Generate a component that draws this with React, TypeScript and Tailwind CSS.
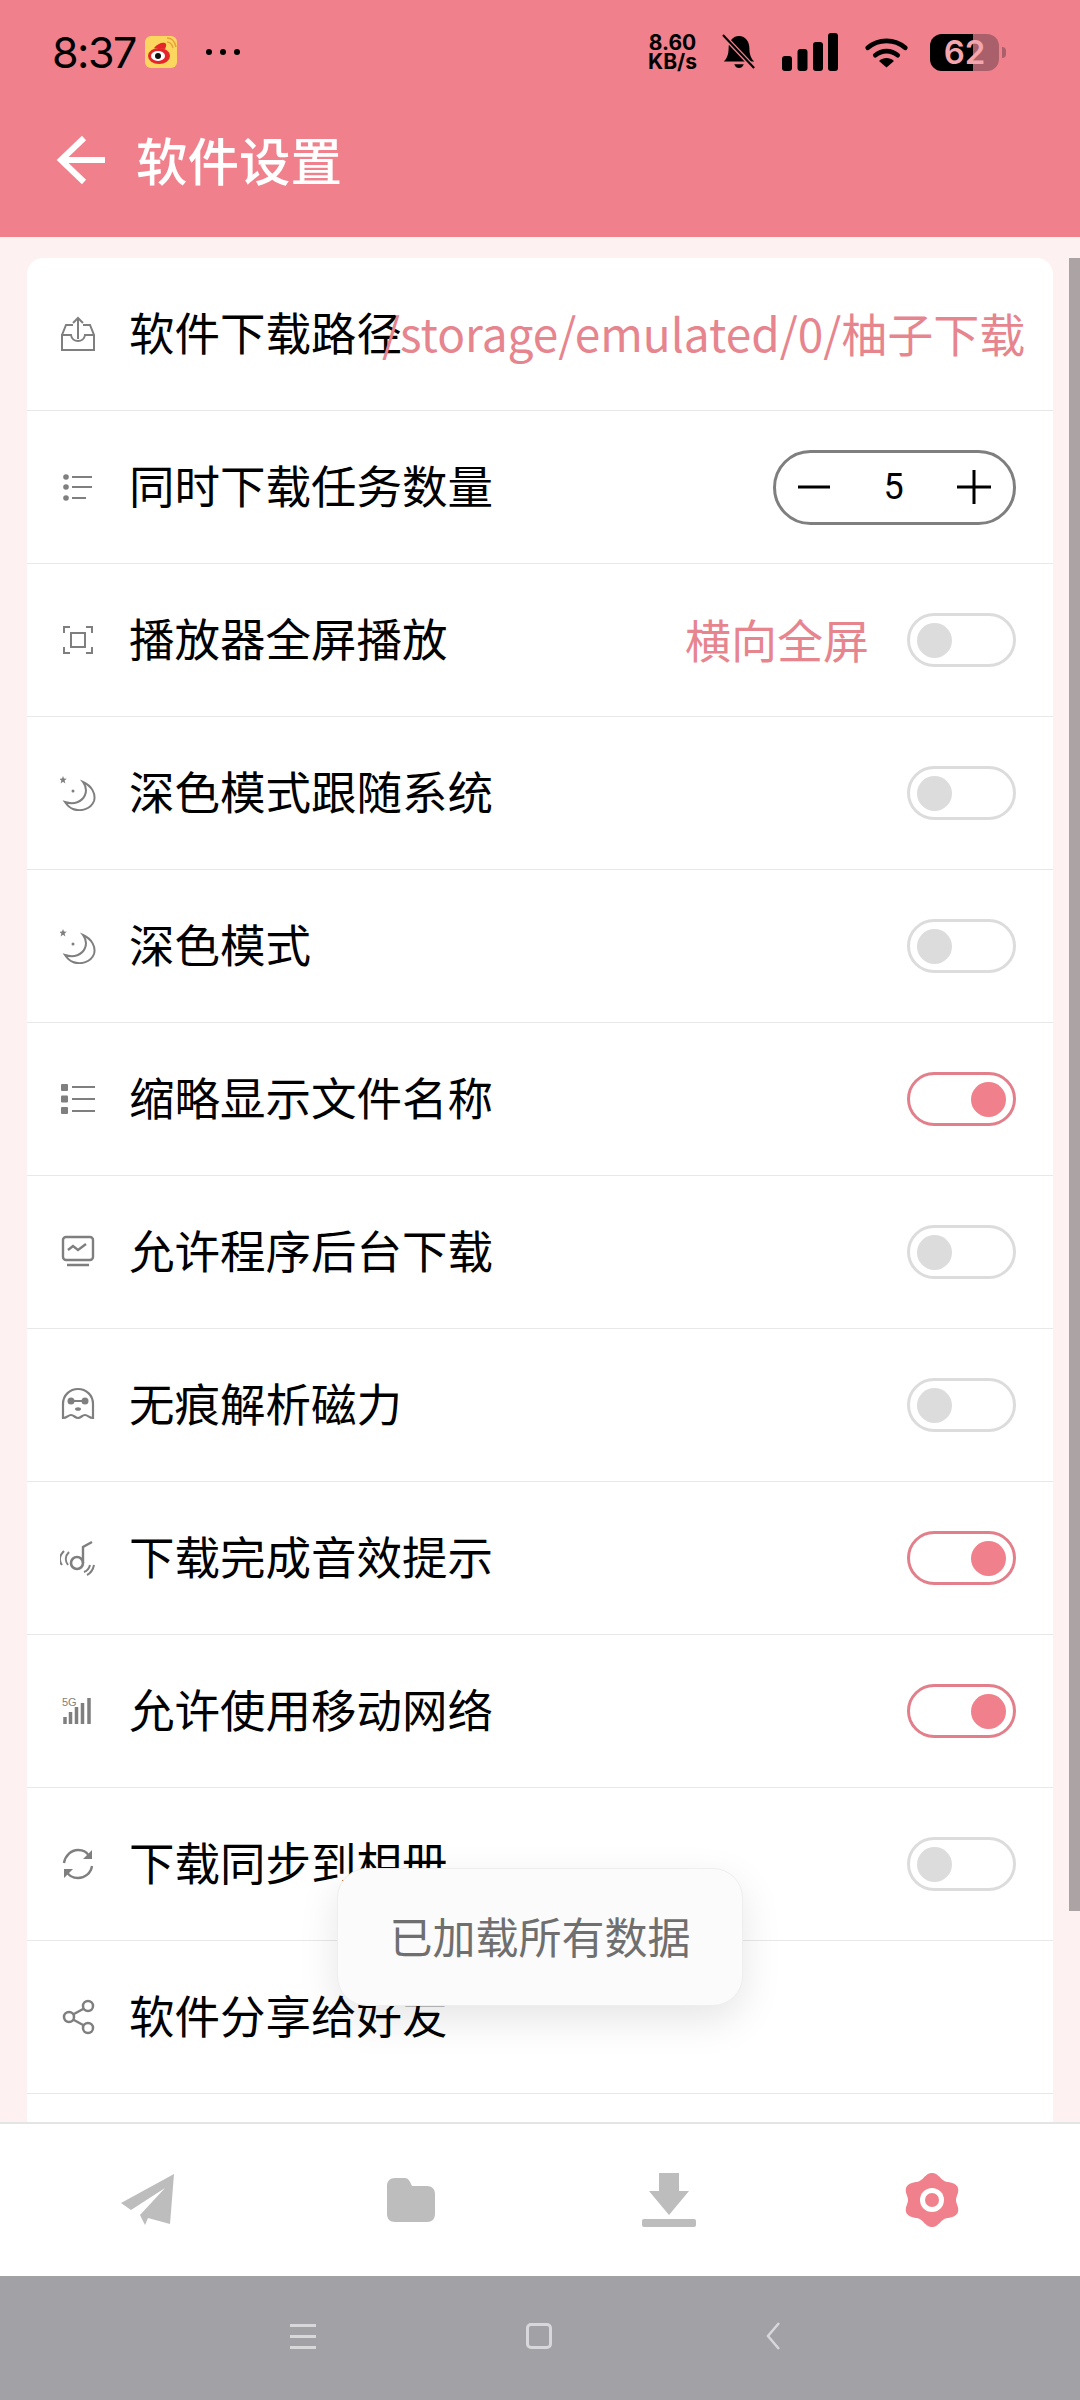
import React from "react";

const F = { fontFamily: '"Noto Sans CJK SC","Noto Sans",sans-serif' };
const G = "#7f7f7f";

function I({ children }: { children: React.ReactNode }) {
  return (
    <svg width="36" height="36" viewBox="0 0 36 36" fill="none" stroke={G} strokeWidth="2" className="shrink-0">
      {children}
    </svg>
  );
}

const moon = (
  <I>
    <path d="M23 7C32 11 36 19 34 26C31 34 21 37 13 34C10 33 7 30 5 27C14 30 22 27 25 20C27 15 26 11 23 7Z" />
    <path d="M3 1l1 2.600 2.800.2-2.200 1.800.8 2.800L3 6.800.6 8.400l.8-2.800L-.8 3.800 2 3.600Z" fill={G} stroke="none" />
    <circle cx="13" cy="16" r="1.500" fill={G} stroke="none" />
  </I>
);

const icons: Record<string, React.ReactNode> = {
  inbox: (
    <I>
      <path d="M2 19 6 9h7M23 9h7l4 10v15H2V19h9c1 8 13 8 14 0h9" />
      <path d="M18 23V2M13 7l5-5 5 5" />
    </I>
  ),
  list: (
    <I>
      <circle cx="6" cy="8" r="2.800" fill={G} stroke="none" />
      <circle cx="6" cy="18" r="2.800" fill={G} stroke="none" />
      <circle cx="6" cy="29" r="2.800" fill={G} stroke="none" />
      <path d="M12 8h20M12 18h20M12 29h14" />
    </I>
  ),
  full: (
    <I>
      <path d="M4 11V5h6M26 5h6v6M32 25v6h-6M10 31H4v-6" />
      <rect x="11" y="11" width="14" height="14" />
    </I>
  ),
  moon,
  thumbs: (
    <I>
      <rect x="1" y="3" width="7" height="7" rx="1" fill={G} stroke="none" />
      <rect x="1" y="14.500" width="7" height="7" rx="1" fill={G} stroke="none" />
      <rect x="1" y="26" width="7" height="7" rx="1" fill={G} stroke="none" />
      <path d="M12 6h23M12 18h23M12 30h23" />
    </I>
  ),
  chart: (
    <I>
      <rect x="3" y="3" width="30" height="23" rx="3" strokeWidth="2.400" />
      <path d="M8 16l5-4 5 4 8-6M7 31h22" strokeWidth="2.400" />
    </I>
  ),
  ghost: (
    <I>
      <path d="M3 31V17C3 8 10 2 18 2s15 6 15 15v14c-4 0-5-3-8-3s-4 3-7 3-4-3-7-3-4 3-8 3Z" strokeWidth="2.200" />
      <circle cx="11" cy="14" r="3.500" fill={G} stroke="none" />
      <circle cx="25" cy="14" r="3.500" fill={G} stroke="none" />
      <path d="M14 14h8" />
      <ellipse cx="18" cy="22" rx="3" ry="1.800" fill={G} stroke="none" />
    </I>
  ),
  sound: (
    <I>
      <path d="M32 2l-9 5v16" strokeWidth="2.400" />
      <circle cx="17" cy="23" r="6" strokeWidth="2.600" />
      <path d="M9 12c-4 4-4 9-1 13M4 11c-5 5-5 10-2 14M24 32c3-1 5-3 6-7M27 35c4-2 6-5 7-10" />
    </I>
  ),
  signal: (
    <I>
      <path d="M5 31v-7M10.500 31V19M16.500 31V14M22.500 31V10M29 31V5" strokeWidth="3.500" />
      <text x="2" y="13" fontSize="11" fill={G} stroke="none" fontFamily="Liberation Sans">5G</text>
    </I>
  ),
  sync: (
    <I>
      <path d="M4 17C5 10 11 4 18 4c5 0 9 2 11 6M32 20c-1 7-7 12-14 12-5 0-9-2-11-6" strokeWidth="2.400" />
      <path d="M32 4v9h-9ZM4 32v-9h9Z" fill={G} stroke="none" />
    </I>
  ),
  share: (
    <I>
      <circle cx="9" cy="18" r="5" strokeWidth="2.500" />
      <circle cx="28" cy="7" r="5" strokeWidth="2.500" />
      <circle cx="28" cy="29" r="5" strokeWidth="2.500" />
      <path d="M13 15.500l11-6M13 20.500l11 6" strokeWidth="2.500" />
    </I>
  ),
};

function Sw({ on }: { on?: boolean }) {
  return on ? (
    <div className="flex h-[54px] w-[109px] items-center justify-end rounded-full border-[3px] border-[#e27f8b] bg-white pr-[7px]">
      <div className="h-[35px] w-[35px] rounded-full bg-[#f0808b]" />
    </div>
  ) : (
    <div className="flex h-[54px] w-[109px] items-center rounded-full border-[3px] border-[#dcdcdc] bg-white pl-[7px]">
      <div className="h-[35px] w-[35px] rounded-full bg-[#dcdcdc]" />
    </div>
  );
}

function Row({ icon, label, right }: { icon: string; label: string; right?: React.ReactNode }) {
  return (
    <div className="flex h-[153px] items-center border-b border-[#e8e8e8] pl-[33px] pr-[37px]">
      <div className="flex w-[69px] shrink-0 items-center">{icons[icon]}</div>
      <div className="shrink-0 whitespace-nowrap pb-[5px] text-[45.5px] leading-none text-black">{label}</div>
      <div className="ml-auto flex shrink-0 items-center">{right}</div>
    </div>
  );
}

function Stepper() {
  return (
    <div className="flex h-[75px] w-[243px] items-center justify-between rounded-full border-[3px] border-[#7f7f7f] pl-[22px] pr-[22px]">
      <svg width="32" height="4" viewBox="0 0 32 4"><path d="M0 2h32" stroke="#000" strokeWidth="3" /></svg>
      <span className="text-[36px] leading-none text-black" style={{ fontFamily: "Roboto" }}>5</span>
      <svg width="34" height="34" viewBox="0 0 34 34"><path d="M0 17h34M17 0v34" stroke="#000" strokeWidth="3" /></svg>
    </div>
  );
}

function gearPath() {
  const pts: string[] = [];
  for (let i = 0; i < 180; i++) {
    const t = (i / 180) * Math.PI * 2;
    const r = 24.6 + 2.4 * Math.cos(6 * t);
    const x = 27 + Math.sin(t) * r * 1.08;
    const y = 27 - Math.cos(t) * r;
    pts.push(`${x.toFixed(2)} ${y.toFixed(2)}`);
  }
  return `M${pts.join("L")}Z`;
}

export default function App() {
  return (
    <div className="relative flex h-[2400px] w-[1080px] flex-col overflow-hidden bg-[#fdf1f1]" style={F}>
      <header className="h-[237px] shrink-0 bg-[#f0808b]">
        <div className="flex h-[102px] items-center pl-[52px] pr-[74px] pt-[2px]">
          <span className="text-[43px] leading-none tracking-[-1.5px] text-black" style={{ fontFamily: "Inter" }}>8:37</span>
          <svg width="32" height="32" viewBox="0 0 32 32" className="ml-[9px]">
            <rect width="32" height="32" rx="6" fill="#fbd760" />
            <ellipse cx="14" cy="20" rx="11" ry="8" fill="#e5252a" />
            <path d="M9 12c3-4 8-6 11-5 2 1 1 4 0 6Z" fill="#e5252a" />
            <ellipse cx="13" cy="20" rx="7" ry="5" fill="#fff" />
            <circle cx="13" cy="20" r="3" fill="#111" />
            <path d="M22 6c3 0 5 2 6 6M22 2c5 0 8 4 9 9" stroke="#e9a23b" strokeWidth="1.500" fill="none" />
          </svg>
          <div className="ml-[29px] flex gap-[8px]">
            <span className="h-[6px] w-[6px] rounded-full bg-black" />
            <span className="h-[6px] w-[6px] rounded-full bg-black" />
            <span className="h-[6px] w-[6px] rounded-full bg-black" />
          </div>
          <div className="ml-auto flex items-center">
            <div className="text-center text-[21px] font-bold leading-[19px] text-black" style={{ fontFamily: "Inter" }}>
              8.60<br />KB/s
            </div>
            <svg width="34" height="36" viewBox="0 0 36 38" className="ml-[25px]">
              <path d="M18 2c7 0 11 6 11 13 0 7 2 11 5 14H2c3-3 5-7 5-14C7 8 11 2 18 2Z" />
              <path d="M13 32h10c-1 3-3 4-5 4s-4-1-5-4Z" />
              <path d="M1 1l33 35" stroke="#f0808b" strokeWidth="5" />
              <path d="M1 1l33 35" stroke="#000" strokeWidth="2.200" />
            </svg>
            <svg width="56" height="38" viewBox="0 0 56 38" className="ml-[26px]">
              <rect x="0" y="23" width="10" height="15" rx="3" />
              <rect x="15.500" y="16" width="10" height="22" rx="3" />
              <rect x="31" y="9" width="10" height="29" rx="3" />
              <rect x="46" y="0" width="10" height="38" rx="3" />
            </svg>
            <svg width="43" height="31" viewBox="0 0 46 32" className="ml-[27px]">
              <path d="M3 11c11-10 29-10 40 0" fill="none" stroke="#000" strokeWidth="5" strokeLinecap="round" />
              <path d="M11 19c7-6 17-6 24 0" fill="none" stroke="#000" strokeWidth="5" strokeLinecap="round" />
              <path d="M15 25c5-4 11-4 16 0l-8 7Z" />
            </svg>
            <div className="relative ml-[22px] flex h-[37px] w-[69px] rounded-[12px] bg-[#a9606a]">
              <div className="h-full w-[43px] rounded-l-[12px] bg-black" />
              <div className="absolute inset-0 flex items-center justify-center text-[33px] font-semibold leading-none text-[#f4a6af]" style={{ fontFamily: "Inter" }}>
                62
              </div>
            </div>
            <div className="ml-[3px] h-[11px] w-[4px] rounded-r-full bg-[#a9606a]" />
          </div>
        </div>
        <div className="flex h-[116px] items-center pl-[56px]">
          <svg width="50" height="50" viewBox="0 0 50 50" fill="none" stroke="#fff" strokeWidth="6">
            <path d="M49 25H5M28 3 5 25l23 22" />
          </svg>
          <span className="ml-[30px] pb-[3px] text-[51.5px] font-medium leading-none text-white">软件设置</span>
        </div>
      </header>

      <main className="relative min-h-0 flex-1 overflow-hidden px-[27px] pt-[21px]">
        <div className="overflow-hidden rounded-t-[16px] bg-white">
          <Row
            icon="inbox"
            label="软件下载路径"
            right={<span className="-ml-[20px] whitespace-nowrap pb-[5px] text-[46px] leading-none text-[#e7858f]">/storage/emulated/0/柚子下载</span>}
          />
          <Row icon="list" label="同时下载任务数量" right={<Stepper />} />
          <Row
            icon="full"
            label="播放器全屏播放"
            right={
              <>
                <span className="mr-[38px] pb-[5px] text-[46px] leading-none text-[#e7858f]">横向全屏</span>
                <Sw />
              </>
            }
          />
          <Row icon="moon" label="深色模式跟随系统" right={<Sw />} />
          <Row icon="moon" label="深色模式" right={<Sw />} />
          <Row icon="thumbs" label="缩略显示文件名称" right={<Sw on />} />
          <Row icon="chart" label="允许程序后台下载" right={<Sw />} />
          <Row icon="ghost" label="无痕解析磁力" right={<Sw />} />
          <Row icon="sound" label="下载完成音效提示" right={<Sw on />} />
          <Row icon="signal" label="允许使用移动网络" right={<Sw on />} />
          <Row icon="sync" label="下载同步到相册" right={<Sw />} />
          <Row icon="share" label="软件分享给好友" />
          <div className="h-[153px]" />
        </div>
        <div className="absolute right-0 top-[21px] h-[1653px] w-[11px] bg-[#aca3a5]" />
      </main>

      <nav className="flex h-[154px] shrink-0 items-center justify-between border-t-2 border-[#e4e4e4] bg-white px-[121px]">
        <svg width="54" height="52" viewBox="0 0 54 52" fill="#bdbdbd">
          <path d="M53 0 49 50 27 44 24 51 19 41 44 14 10 36 0 29Z" />
        </svg>
        <svg width="48" height="44" viewBox="0 0 48 44" fill="#bdbdbd" className="ml-[6px]">
          <path d="M0 8C0 3 3 0 8 0h10c3 0 5 3 7 8h15c5 0 8 3 8 8v20c0 5-3 8-8 8H8c-5 0-8-3-8-8Z" />
        </svg>
        <svg width="54" height="54" viewBox="0 0 54 54" fill="#bdbdbd" className="mr-[3px]">
          <path d="M17 0h20v18h10L27 42 7 18h10Z" />
          <rect y="46" width="54" height="8" rx="2" />
        </svg>
        <svg width="54" height="54" viewBox="0 0 54 54">
          <path d={gearPath()} fill="#f0808b" />
          <circle cx="27" cy="27" r="12" fill="#fff" />
          <circle cx="27" cy="27" r="7" fill="#f0808b" />
        </svg>
      </nav>

      <div className="flex h-[124px] shrink-0 items-center justify-center bg-[#a1a1a6]">
        <div className="mr-[10px] flex w-[490px] items-center justify-between pb-[4px]">
          <div className="flex w-[26px] flex-col gap-[8px]">
            <span className="h-[3px] bg-[#d8d8da]" />
            <span className="h-[3px] bg-[#d8d8da]" />
            <span className="h-[3px] bg-[#d8d8da]" />
          </div>
          <div className="mr-[4px] h-[26px] w-[26px] rounded-[5px] border-[3px] border-[#d8d8da]" />
          <svg width="14" height="28" viewBox="0 0 14 28" fill="none" stroke="#d8d8da" strokeWidth="2.500">
            <path d="M13 1 2 14l11 13" />
          </svg>
        </div>
      </div>

      <div className="absolute left-[337px] top-[1868px] flex h-[138px] w-[406px] items-center justify-center rounded-[30px] border border-[#eeeeee] bg-[#fbfbfb] pb-[3px] text-[43px] leading-none text-[#6f6f6f] shadow-[0_14px_40px_rgba(0,0,0,0.1)]">
        已加载所有数据
      </div>
    </div>
  );
}
